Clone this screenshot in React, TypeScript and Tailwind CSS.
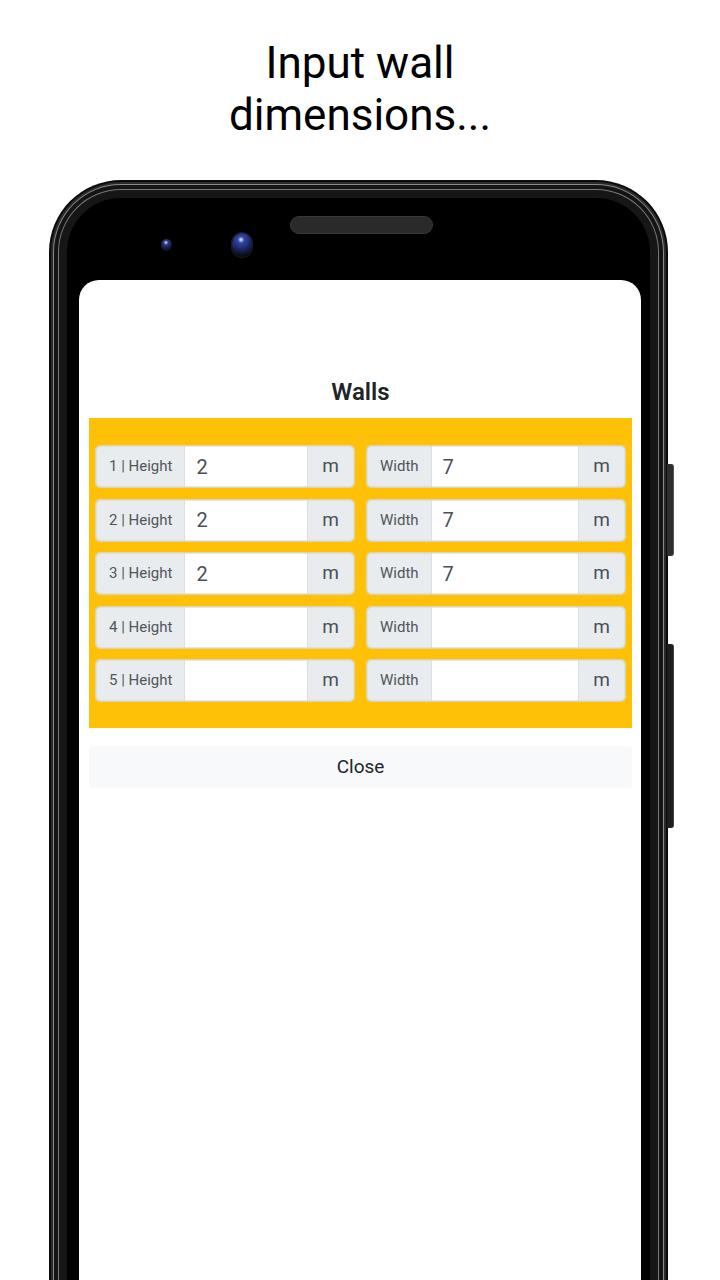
import React from 'react';

interface WallRow {
    height: string;
    width: string;
}

const walls: WallRow[] = [
    { height: '2', width: '7' },
    { height: '2', width: '7' },
    { height: '2', width: '7' },
    { height: '', width: '' },
    { height: '', width: '' },
];

const DimensionInput: React.FC<{ label: string; value: string }> = ({ label, value }) => (
    <div className="flex h-[41px] rounded-[4px] shadow-[0_0_0_1px_#e2d6a8]">
        <span className="flex items-center px-3 bg-[#e9ecef] border border-[#dcdfe3] rounded-l-[4px] text-[15px] text-[#4f565c] whitespace-nowrap">
            {label}
        </span>
        <input
            readOnly
            value={value}
            className="min-w-0 flex-1 bg-white pl-[11px] text-[20px] text-[#495057] outline-none border-y border-[#e4e6e9]"
        />
        <span className="flex items-center justify-center w-[47px] bg-[#e9ecef] border border-[#dcdfe3] rounded-r-[4px] text-[19px] text-[#495057]">
            m
        </span>
    </div>
);

const App: React.FC = () => {
    return (
        <div className="w-[720px] h-[1280px] bg-white overflow-hidden flex flex-col font-['Roboto',sans-serif]">
            {/* Caption */}
            <h1 className="pt-[37px] text-center text-[44px] leading-[52px] text-black font-normal">
                Input wall
                <br />
                dimensions...
            </h1>

            {/* Phone mockup */}
            <div className="relative mt-[39px] ml-[49px] w-[619px] flex-1 flex flex-col">
                {/* Side buttons */}
                <div className="absolute right-[-6px] top-[284px] w-[7px] h-[92px] rounded-r-[3px] bg-[#2e2e2e] border-r border-[#555]" />
                <div className="absolute right-[-6px] top-[464px] w-[7px] h-[184px] rounded-r-[3px] bg-[#1e1e1e] border-r border-[#444]" />

                <div className="flex-1 flex flex-col rounded-t-[72px] bg-[#0a0a0a] px-[2px] pt-[2px]">
                    <div className="flex-1 flex flex-col rounded-t-[70px] bg-[#2a2a2a] px-[2px] pt-[2px]">
                        <div className="flex-1 flex flex-col rounded-t-[68px] bg-[#8a8a8a] px-[1px] pt-[1px]">
                            <div className="flex-1 flex flex-col rounded-t-[67px] bg-[#141414] px-[4px] pt-[4px]">
                                <div className="flex-1 flex flex-col rounded-t-[63px] bg-[#777] px-[1px] pt-[1px]">
                                    <div className="flex-1 flex flex-col rounded-t-[62px] bg-[#161616] px-[8px] pt-[8px]">
                                        {/* Bezel */}
                                        <div className="relative flex-1 flex flex-col rounded-t-[54px] bg-black pl-[12px] pr-[9px] pt-[82px]">
                                            <div className="absolute left-[223px] top-[18px] w-[143px] h-[18px] rounded-full bg-[#2a2a2a] border border-[#383838]" />
                                            <div className="absolute left-[94px] top-[41px] w-[11px] h-[12px] rounded-full bg-[radial-gradient(circle_at_45%_30%,#e8e8f0_0%,#2b3a88_22%,#141b40_55%,#050505_100%)]" />
                                            <div className="absolute left-[165px] top-[35px] w-[20px] h-[24px] rounded-full bg-[radial-gradient(circle_at_45%_28%,#f0f0f5_0%,#2f46a6_16%,#1a2560_48%,#0a0a0a_80%)] shadow-[0_0_0_1px_#1a1a1a]" />

                                            {/* Screen */}
                                            <div className="flex-1 bg-white rounded-t-[20px] pl-[10px] pr-[9px]">
                                                <h2 className="pt-[96px] text-center text-[24px] leading-[32px] font-semibold text-[#212529]">
                                                    Walls
                                                </h2>
                                                <div className="mt-[10px] bg-[#ffc107] pt-[28px] pb-[27px] px-[7px] grid grid-cols-2 gap-x-[13px] gap-y-[12.5px]">
                                                    {walls.map((w, i) => (
                                                        <React.Fragment key={i}>
                                                            <DimensionInput label={`${i + 1} | Height`} value={w.height} />
                                                            <DimensionInput label="Width" value={w.width} />
                                                        </React.Fragment>
                                                    ))}
                                                </div>
                                                <button
                                                    type="button"
                                                    className="mt-[18px] w-full h-[42px] rounded-[4px] bg-[#f8f9fa] text-[19px] text-[#212529]"
                                                >
                                                    Close
                                                </button>
                                            </div>
                                        </div>
                                    </div>
                                </div>
                            </div>
                        </div>
                    </div>
                </div>
            </div>
        </div>
    );
};

export default App;
